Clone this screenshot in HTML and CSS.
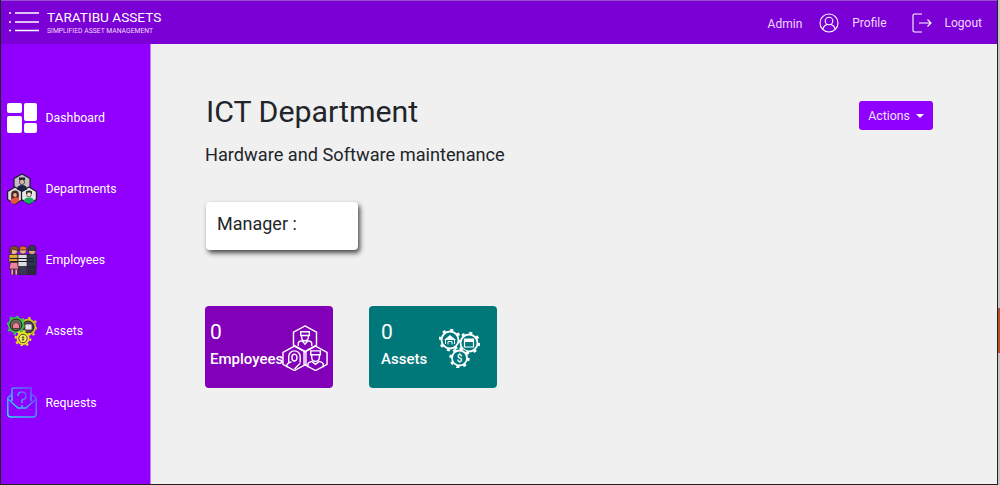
FILE: index.html
```
<!DOCTYPE html>
<html lang="en">
<head>
<meta charset="utf-8">
<title>Taratibu Assets</title>
<link rel="stylesheet" href="styles.css">
</head>
<body>
<div class="window">
  <div class="app">
    <header class="topbar">
      <div class="brand">
        <svg class="menu-icon" width="32" height="22" viewBox="0 0 32 22">
          <g fill="none" stroke="#fff" stroke-width="1.500">
            <path d="M8 3H32M8 12H32M8 20.500H32"/>
            <path d="M2 3H4M2 12H4M2 20.500H4"/>
          </g>
        </svg>
        <div class="brand-text">
          <div class="brand-name">TARATIBU ASSETS</div>
          <div class="brand-sub">SIMPLIFIED ASSET MANAGEMENT</div>
        </div>
      </div>
      <nav class="topnav">
        <span class="admin">Admin</span>
        <svg class="nav-icon" width="20" height="20" viewBox="0 0 20 20">
          <g fill="none" stroke="#fff" stroke-width="1.100">
            <circle cx="10" cy="10" r="9"/>
            <circle cx="10" cy="8" r="3.800"/>
            <path d="M3.800 16.200C4.500 13.500 6.500 12 8 11.500M16.200 16.200C15.500 13.500 13.500 12 12 11.500"/>
          </g>
        </svg>
        <span class="nav-link">Profile</span>
        <svg class="nav-icon logout-icon" width="20" height="20" viewBox="0 0 20 20">
          <g fill="none" stroke="#fff" stroke-width="1.100">
            <path d="M10 1H2.500Q1 1 1 2.500V17.500Q1 19 2.500 19H10"/>
            <path d="M7 10H19M15.500 6.500L19 10L15.500 13.500"/>
          </g>
        </svg>
        <span class="nav-link">Logout</span>
      </nav>
    </header>
    <div class="body-row">
      <aside class="sidebar">
        <a class="side-item">
          <svg class="side-icon" width="30" height="30" viewBox="0 0 30 30">
            <g fill="#fff">
              <rect x="0" y="0" width="15" height="10" rx="2"/>
              <rect x="17" y="0" width="13" height="18" rx="2"/>
              <rect x="0" y="13" width="15" height="17" rx="2"/>
              <rect x="17" y="20" width="13" height="10" rx="2"/>
            </g>
          </svg>
          <span>Dashboard</span>
        </a>
        <a class="side-item">
          <svg class="side-icon" width="30" height="32" viewBox="0 0 30 32">
            <g stroke="#1c1c24" stroke-width="1.200">
              <path d="M15 1L23 5.500V14.500L15 19L7 14.500V5.500Z" fill="#c4bccc"/>
              <path d="M8 14L15.500 18.500V26.500L8 31L.6 26.500V18.500Z" fill="#ded8dc"/>
              <path d="M22 14L29.400 18.500V26.500L22 31L14.500 26.500V18.500Z" fill="#e6e6e6"/>
            </g>
            <path d="M12 4.500H18V7H12Z" fill="#20202e"/>
            <circle cx="15" cy="9" r="2.600" fill="#d8b8a0" stroke="#222" stroke-width=".7"/>
            <path d="M10 16.500Q10 12 15 12T20 16.500L15 19Z" fill="#1c2444"/>
            <path d="M8 17.500a3.800 3.800 0 0 1 3.800 3.800v5.700H4.200v-5.700A3.800 3.800 0 0 1 8 17.500z" fill="#4a2222"/>
            <circle cx="8" cy="22" r="1.900" fill="#e8b090"/>
            <path d="M4 30v-3q1-2.500 4-2.500h4V28L8 31Z" fill="#e8553a"/>
            <path d="M19 18.500q3-2 6 0v2.500h-6z" fill="#2a2a2a"/>
            <circle cx="22" cy="21.500" r="2.400" fill="#f0dcc8" stroke="#222" stroke-width=".6"/>
            <path d="M17 28.500q0-4 5-4t5 4l-5 2.500z" fill="#14b060"/>
          </svg>
          <span>Departments</span>
        </a>
        <a class="side-item">
          <svg class="side-icon" width="30" height="30" viewBox="0 0 30 30">
            <g stroke="#2a1e20" stroke-width=".7">
              <rect x="4" y="23" width="2.500" height="7" fill="#e8b090"/>
              <rect x="8" y="23" width="2.500" height="7" fill="#e8b090"/>
              <path d="M3.500 17H10.500L12 24H2Z" fill="#f080a0"/>
              <rect x="2" y="9.500" width="9" height="8" fill="#e0a838"/>
              <circle cx="7" cy="6" r="3.600" fill="#eab898"/>
              <path d="M2.500 7Q2 1 7 1T11.500 6L9 5L5 4L4 8Z" fill="#8a4a24"/>
              <rect x="12" y="21" width="8" height="9" fill="#363c50"/>
              <rect x="11" y="9.500" width="10" height="12" fill="#dcdce4"/>
              <circle cx="16" cy="5.500" r="3.600" fill="#f0b090"/>
              <path d="M12 5Q12 1 16 1T20 5Z" fill="#e8702a"/>
              <rect x="21" y="21" width="8" height="9" fill="#262e44"/>
              <rect x="20" y="9.500" width="10" height="12" fill="#2a3654"/>
              <circle cx="25" cy="6" r="3.600" fill="#d8a888"/>
              <path d="M21 5.500Q21 0 25 0T29 5.500Z" fill="#323a52"/>
            </g>
            <path d="M3 13.500H27M3 16.500H27" stroke="#1e1a22" stroke-width="1"/>
          </svg>
          <span>Employees</span>
        </a>
        <a class="side-item">
          <svg class="side-icon" width="30" height="30" viewBox="0 0 30 30">
            <circle cx="21" cy="11" r="8.200" fill="#c8d020"/>
            <circle cx="21" cy="11" r="6" fill="#5a4a6a" stroke="#222" stroke-width="1"/>
            <circle cx="21" cy="11" r="9.200" fill="none" stroke="#c8d020" stroke-width="2" stroke-dasharray="2.500 4.700"/>
            <circle cx="9" cy="9" r="8" fill="#38c848"/>
            <circle cx="9" cy="9" r="6" fill="#6a6a5c" stroke="#222" stroke-width="1"/>
            <circle cx="9" cy="9" r="8.800" fill="none" stroke="#38c848" stroke-width="2" stroke-dasharray="2.500 4.400"/>
            <circle cx="16" cy="22.500" r="6.500" fill="#ece420"/>
            <circle cx="16" cy="22.500" r="7.400" fill="none" stroke="#ece420" stroke-width="2" stroke-dasharray="2.500 3.300"/>
            <path d="M5.500 9L9 5.800L12.500 9V12.500H5.500Z" fill="#f08098" stroke="#222" stroke-width=".7"/>
            <rect x="18" y="8" width="7" height="6" fill="#f0e0e8" stroke="#222" stroke-width=".7"/>
            <circle cx="16" cy="22.500" r="4.200" fill="#f4ec50" stroke="#444" stroke-width="1"/>
            <path d="M16 20v5M14.800 21.500h2.400M14.800 23.500h2.400" stroke="#444" stroke-width=".8"/>
          </svg>
          <span>Assets</span>
        </a>
        <a class="side-item">
          <svg class="side-icon" width="30" height="31" viewBox="0 0 30 31">
            <defs>
              <linearGradient id="req" x1="0" y1="1" x2="1" y2="0">
                <stop offset="0" stop-color="#20e8f0"/>
                <stop offset="1" stop-color="#6a50ff"/>
              </linearGradient>
            </defs>
            <g fill="none" stroke="url(#req)" stroke-width="1.500">
              <path d="M5 14V2.500Q5 1 7 1H24V14"/>
              <path d="M5 7L.8 11V27Q.8 30 4 30H26Q29.200 30 29.200 27V11L24.500 7"/>
              <path d="M1 12L11 21H19L29 12"/>
              <path d="M11 9q0-4 4-4t4 4q0 3-4 4v3M15 18v2"/>
            </g>
          </svg>
          <span>Requests</span>
        </a>
      </aside>
      <main class="content">
        <div class="head-row">
          <h1 class="title">ICT Department</h1>
          <button class="actions" type="button">Actions<i class="caret"></i></button>
        </div>
        <p class="subtitle">Hardware and Software maintenance</p>
        <div class="manager">Manager :</div>
        <div class="stats">
          <div class="stat stat-emp">
            <div class="stat-text">
              <div class="stat-num">0</div>
              <div class="stat-label">Employees</div>
            </div>
            <svg class="stat-icon" width="46" height="46" viewBox="0 0 48 48">
              <g fill="none" stroke="#fff" stroke-width="1.500">
                <path d="M24 1L36 7.500V21L24 27.500L12 21V7.500Z"/>
                <path d="M13 22L25 28.500V41L13 47.500L1 41V28.500Z"/>
                <path d="M35 22L47 28.500V41L35 47.500L23 41V28.500Z"/>
                <path d="M19.500 7H28.500V11H19.500ZM20.500 11V13A3.500 3.500 0 0 0 27.500 13V11M17 22V19Q17 17 21 16.500L24 20L27 16.500Q31 17 31 19V22"/>
                <path d="M7 40V33A6 6 0 0 1 19 33V39M10.500 33A2.500 2.500 0 0 1 15.500 33V35A2.500 2.500 0 0 1 10.500 35ZM5 44V42Q6 39 10 38.500M19 40L13 46"/>
                <path d="M30 27H40V31H30ZM31 31V34A4 4 0 0 0 39 34V31M27 44V41Q27 39 31 38L35 41L39 38Q43 39 43 41V44"/>
              </g>
            </svg>
          </div>
          <div class="stat stat-assets">
            <div class="stat-text">
              <div class="stat-num">0</div>
              <div class="stat-label">Assets</div>
            </div>
            <svg class="stat-icon" width="41" height="41" viewBox="0 0 41 41">
              <g fill="none" stroke="#fff">
                <circle cx="30" cy="16" r="8.500" stroke-width="1.800"/>
                <circle cx="30" cy="16" r="10" stroke-width="2.500" stroke-dasharray="3 4.850"/>
              </g>
              <circle cx="11" cy="13" r="10" fill="#00787a"/>
              <circle cx="20.500" cy="31" r="9.500" fill="#00787a"/>
              <g fill="none" stroke="#fff">
                <circle cx="11" cy="13" r="8.500" stroke-width="1.800"/>
                <circle cx="11" cy="13" r="10" stroke-width="2.500" stroke-dasharray="3 4.850"/>
                <circle cx="20.500" cy="31" r="7.500" stroke-width="1.800"/>
                <circle cx="20.500" cy="31" r="9" stroke-width="2.500" stroke-dasharray="3 4.070"/>
                <path d="M6.500 17V13M15.500 17V13M9 17.500V14.500H13V17.500"/>
              </g>
              <path d="M5 13L11 8L17 13Z" fill="#fff"/>
              <path d="M25.500 12H34.500V20H25.500Z" fill="none" stroke="#fff" stroke-width="1.200"/>
              <path d="M25.500 12H34.500V15H25.500Z" fill="#fff"/>
              <text class="dollar" x="20.500" y="34.500" text-anchor="middle">$</text>
            </svg>
          </div>
        </div>
      </main>
    </div>
  </div>
  <div class="edge"><span class="edge-mark"></span></div>
</div>
</body>
</html>
```
FILE: styles.css
```
* { box-sizing: border-box; }
html, body { margin: 0; height: 100%; overflow: hidden; }
body { font-family: Roboto, "Noto Sans", sans-serif; background: #c8c8c8; }

.window { display: flex; width: 1000px; height: 485px; }
.app {
  flex: 0 0 998px;
  display: flex;
  flex-direction: column;
  border-left: 1px solid #222;
  border-right: 1px solid #222;
  border-bottom: 1px solid #222;
  background: #f0f0f0;
}
.edge { flex: 0 0 2px; padding-top: 308px; background: #c4c4c4; }
.edge-mark { display: block; height: 45px; background: #b5502e; }

.topbar {
  flex: 0 0 44px;
  display: flex;
  align-items: center;
  justify-content: space-between;
  background: #7b00d5;
  border-top: 1px solid #9a4fd0;
  color: #fff;
  padding: 0 15px 0 6px;
}
.brand { display: flex; align-items: center; gap: 8px; }
.menu-icon { margin-top: -3px; }
.brand-name { font-size: 13.600px; line-height: 16px; }
.brand-sub { font-size: 6.800px; line-height: 9px; margin-top: 2px; color: #f0d8ff; }
.topnav { display: flex; align-items: center; color: #f0d8ff; font-size: 12px; }
.admin { margin-right: 17px; margin-top: 3px; }
.nav-link { margin-left: 13px; }
.logout-icon { margin-left: 25px; }

.body-row { flex: 1; display: flex; min-height: 0; }
.sidebar {
  flex: 0 0 150px;
  background: #9100ff;
  border-right: 1px solid #c07cf5;
  padding-top: 57.500px;
  display: flex;
  flex-direction: column;
  gap: 39.300px;
}
.side-item {
  display: flex;
  align-items: center;
  gap: 8.500px;
  height: 32px;
  padding-left: 6px;
  color: #fff;
  font-size: 12.300px;
}
.content { flex: 1; padding: 49px 64px 0 55px; }
.head-row { display: flex; justify-content: space-between; align-items: flex-start; }
.title { margin: 0; font-size: 30.300px; line-height: 38px; font-weight: 400; color: #212529; }
.actions {
  margin-top: 8px;
  height: 29px;
  width: 74px;
  padding: 0;
  border: 0;
  border-radius: 3px;
  background: #8f00ff;
  color: #f0e0ff;
  font: 12.300px Roboto, sans-serif;
}
.caret {
  display: inline-block;
  margin-left: 6px;
  vertical-align: 2px;
  border-top: 4px solid #fff;
  border-left: 4px solid transparent;
  border-right: 4px solid transparent;
}
.subtitle { margin: 13px 0 0 -1px; font-size: 18.200px; line-height: 21px; color: #212529; }
.manager {
  width: 152px;
  height: 48px;
  margin-top: 37px;
  padding: 11px 11px;
  background: #fff;
  border-radius: 4px;
  box-shadow: 2px 3px 5px rgba(0,0,0,.7);
  font-size: 18px;
  line-height: 22px;
  color: #212529;
}
.stats { display: flex; gap: 36px; margin: 56px 0 0 -1px; }
.stat {
  width: 128px;
  height: 82px;
  border-radius: 4px;
  color: #fff;
  display: flex;
  position: relative;
}
.stat-emp { background: #8200b8; padding: 14px 0 0 5px; }
.stat-assets { background: #00787a; padding: 14px 0 0 12px; }
.stat-num { font-size: 21px; line-height: 24px; }
.stat-label { font-size: 15px; line-height: 20px; font-weight: 500; margin-top: 5px; }
.stat-icon { position: absolute; }
.stat-emp .stat-icon { left: 77px; top: 19px; }
.stat-assets .stat-icon { left: 70px; top: 21px; }
.dollar { font: 500 10px Roboto, sans-serif; fill: #fff; }
```
